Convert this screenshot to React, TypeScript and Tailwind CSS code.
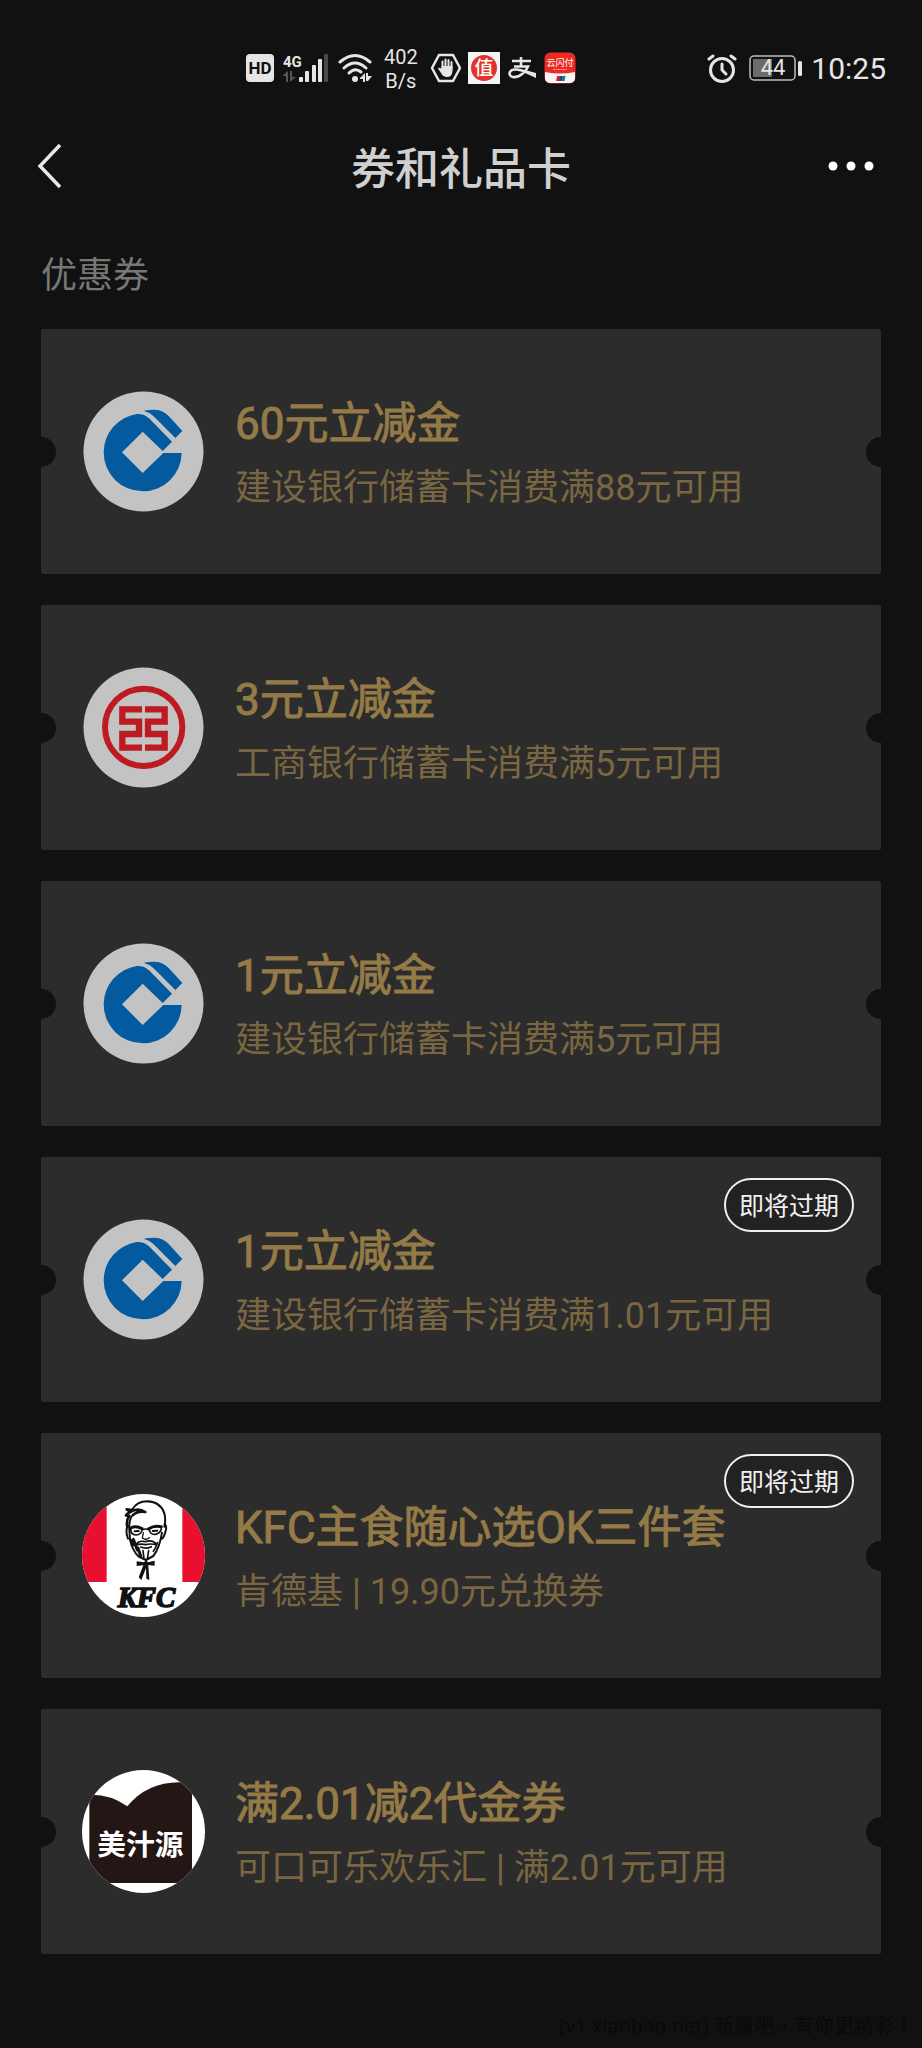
import React from 'react';

type LogoKind = 'ccb' | 'icbc' | 'kfc' | 'mmj';

interface Coupon {
    id: number;
    logo: LogoKind;
    title: string;
    detail: string;
    expiring?: boolean;
}

const coupons: Coupon[] = [
    { id: 1, logo: 'ccb', title: '60元立减金', detail: '建设银行储蓄卡消费满88元可用' },
    { id: 2, logo: 'icbc', title: '3元立减金', detail: '工商银行储蓄卡消费满5元可用' },
    { id: 3, logo: 'ccb', title: '1元立减金', detail: '建设银行储蓄卡消费满5元可用' },
    { id: 4, logo: 'ccb', title: '1元立减金', detail: '建设银行储蓄卡消费满1.01元可用', expiring: true },
    { id: 5, logo: 'kfc', title: 'KFC主食随心选OK三件套', detail: '肯德基 | 19.90元兑换券', expiring: true },
    { id: 6, logo: 'mmj', title: '满2.01减2代金券', detail: '可口可乐欢乐汇 | 满2.01元可用' },
];

function CcbLogo() {
    return (
        <svg viewBox="186 237 369 369" className="size-[123px] shrink-0" aria-hidden="true">
            <circle cx="370.5" cy="421.5" r="180" fill="#c3c3c3" />
            <path
                fill="#035a9e"
                d="M485 426H430L368 486L306 424L368 362L428 420L456 392L390 325Q374 308 350 309A117 117 0 0 0 251 424A117 117 0 0 0 368 541A117 117 0 0 0 485 426Z"
            />
            <path fill="#035a9e" d="M371 299Q385 296 404 296Q430 297 446 315L487 360L466 381L401 316Q388 303 371 299Z" />
        </svg>
    );
}

function IcbcLogo() {
    return (
        <svg viewBox="66 47 369 369" className="size-[123px] shrink-0" aria-hidden="true">
            <circle cx="250.5" cy="231.5" r="180" fill="#c3c3c3" />
            <circle cx="251" cy="231" r="116" fill="none" stroke="#bd1a22" strokeWidth="18" />
            <g fill="none" stroke="#bd1a22" strokeWidth="19">
                <path d="M246 177H187V214H237V251H187V292H246" />
                <path d="M255 177H314V214H264V251H314V292H255" />
            </g>
        </svg>
    );
}

function KfcLogo() {
    return (
        <svg viewBox="36 44 369 369" className="size-[123px] shrink-0 rounded-full bg-white" aria-hidden="true">
            <path fill="#e8102e" d="M30 40H110V308H30ZM337 40H410V308H337Z" />
            <g fill="none" stroke="#111" strokeWidth="6" strokeLinecap="round" strokeLinejoin="round">
                <path d="M186 92Q200 66 232 66Q272 68 283 102Q288 122 283 142" />
                <path d="M186 92L170 90L180 97L168 108L178 110Q168 122 172 142" strokeWidth="8" />
                <path d="M180 98Q204 84 226 98Q204 94 188 108" strokeWidth="8" />
                <path d="M184 112Q176 128 178 150L180 180Q186 212 206 232L228 242L250 230Q268 208 276 160" />
                <path d="M172 142Q166 158 174 178M284 134Q292 142 286 158Q282 174 276 178" />
                <path d="M182 146Q198 138 216 148M236 148Q252 138 274 142" strokeWidth="9" />
                <path d="M182 150Q182 166 198 167Q214 166 216 152M238 152Q240 166 256 165Q272 162 274 148M216 152Q227 146 238 152" strokeWidth="5" />
                <path d="M194 156L206 155M248 155L262 154" strokeWidth="6" />
                <path d="M220 160L217 176Q228 184 238 175" strokeWidth="4" />
                <path d="M196 198Q206 182 226 187Q248 180 260 196Q240 192 227 196Q212 192 196 198Z" strokeWidth="5" />
                <path d="M212 203Q228 210 244 202" strokeWidth="5" />
                <path d="M184 184L190 196M190 180L202 212M204 206L212 230" strokeWidth="9" />
                <path d="M219 214L222 240M236 214L232 240M262 190Q258 206 250 216" strokeWidth="5" />
            </g>
            <path fill="#111" d="M200 246L222 249L228 243L234 249L254 244V259L235 257L238 302L229 298L228 266L214 302L206 294L220 258L200 260Z" />
            <text
                x="143"
                y="384"
                fontSize="86"
                fontWeight="700"
                fontStyle="italic"
                fill="#111"
                stroke="#111"
                strokeWidth="5"
                className="font-['Liberation_Serif',serif]"
            >
                KFC
            </text>
        </svg>
    );
}

function MmjLogo() {
    return (
        <svg viewBox="36 48 369 369" className="size-[123px] shrink-0 rounded-full bg-white" aria-hidden="true">
            <path fill="#241614" d="M58 122Q122 120 172 157Q232 84 330 85L366 100V387H58Z" />
            <text x="82" y="302" fontSize="86" fontWeight="700" fill="#fff" className="font-['Noto_Sans_CJK_SC',sans-serif]">
                美汁源
            </text>
        </svg>
    );
}

const logos: Record<LogoKind, React.ReactNode> = {
    ccb: <CcbLogo />,
    icbc: <IcbcLogo />,
    kfc: <KfcLogo />,
    mmj: <MmjLogo />,
};

function NetworkIcons() {
    return (
        <>
            <svg viewBox="0 0 28 28" className="size-7" aria-hidden="true">
                <rect width="28" height="28" rx="4" fill="#e6e6e6" />
                <text x="14" y="20" fontSize="17" fontWeight="700" textAnchor="middle" fill="#111" className="font-[Roboto,sans-serif]">
                    HD
                </text>
            </svg>
            <svg viewBox="0 0 48 30" className="ml-2 h-[30px] w-12" aria-hidden="true">
                <text x="1" y="14" fontSize="15" fontWeight="700" fill="#e6e6e6" className="font-[Roboto,sans-serif]">
                    4G
                </text>
                <path fill="#555" d="M1 22L6 18V29H4V23H1ZM8 18H10V24H14L8 29Z" />
                <g fill="#e6e6e6">
                    <rect x="17" y="24" width="4" height="5" rx="1" />
                    <rect x="23" y="18" width="4" height="11" rx="1" />
                    <rect x="30" y="12" width="4" height="17" rx="1" />
                    <rect x="36" y="6" width="4" height="23" rx="1" />
                </g>
                <rect x="42" y="1" width="4" height="28" rx="1" fill="#4a4a4a" />
            </svg>
            <svg viewBox="0 0 34 30" className="ml-2 h-[30px] w-[34px]" aria-hidden="true">
                <g fill="none" stroke="#e6e6e6" strokeWidth="3" strokeLinecap="round">
                    <path d="M2 9Q17 -4 32 9" />
                    <path d="M6 15Q17 5 28 15" />
                    <path d="M11 20Q17 14 23 19" />
                </g>
                <circle cx="17" cy="26" r="3" fill="#e6e6e6" />
                <path fill="#e6e6e6" d="M22 25L27 20V29H25V26H22ZM28 20H30V23H34L30 28H28Z" />
            </svg>
        </>
    );
}

function AppIcons() {
    return (
        <>
            <svg viewBox="0 0 32 30" className="h-[30px] w-8" aria-hidden="true">
                <path d="M9 2H23L30 15L23 28H9L2 15Z" fill="none" stroke="#e6e6e6" strokeWidth="2.5" strokeLinejoin="round" />
                <path d="M12.500 16V8.500M15.500 14V6.500M18.500 14V7M21.500 16V9" stroke="#e6e6e6" strokeWidth="2" strokeLinecap="round" />
                <path d="M11.500 13H22.500V18Q22 24 17 24Q13 24 11 20L8 15.500Q9.500 14 11.500 16Z" fill="#e6e6e6" />
            </svg>
            <svg viewBox="0 0 32 32" className="ml-1.5 size-8" aria-hidden="true">
                <rect width="32" height="32" fill="#f4f4f4" />
                <circle cx="16" cy="16" r="13" fill="#e0332c" />
                <text x="16" y="23" fontSize="19" fontWeight="500" textAnchor="middle" fill="#fff" className="font-['Noto_Sans_CJK_SC',sans-serif]">
                    值
                </text>
            </svg>
            <svg viewBox="0 0 28 24" className="ml-2 h-6 w-7" aria-hidden="true">
                <g fill="none" stroke="#e6e6e6" strokeWidth="2.600">
                    <path d="M13 1V10M4 5H23M6 10.500H20Q17 17 11 20Q3 23 1.500 18Q1.500 13 9 13.500Q16 14.500 28 19.500" />
                </g>
                <path d="M17 14L28 17V22L15 16Z" fill="#e6e6e6" />
            </svg>
            <svg viewBox="0 0 32 32" className="ml-2 size-8" aria-hidden="true">
                <rect x="0.500" y="0.500" width="31" height="31" rx="6" fill="#ee2a24" />
                <path d="M1 20Q16 23 31 20V26Q31 31 25 31H7Q1 31 1 26Z" fill="#f6f6f6" />
                <text x="16" y="14" fontSize="9" textAnchor="middle" fill="#fff" className="font-['Noto_Sans_CJK_SC',sans-serif]">
                    云闪付
                </text>
                <path d="M9 17.500H23" stroke="#f7a09c" strokeWidth="1.200" strokeDasharray="2 0.500" />
                <path d="M13 24H17L15.500 29H12Z" fill="#d7263d" />
                <path d="M16 24H19L17.500 29H15Z" fill="#23417c" />
                <path d="M18.500 24H21.500L20.500 29H17.500Z" fill="#0f7c83" />
            </svg>
        </>
    );
}

function StatusBar() {
    return (
        <div className="flex h-24 items-center justify-between pt-10 pr-9 pl-[246px] text-[#e6e6e6]">
            <div className="flex items-center">
                <NetworkIcons />
                <div className="mx-3 pt-0.5 text-center text-xl leading-6">
                    <p>402</p>
                    <p>B/s</p>
                </div>
                <AppIcons />
            </div>
            <div className="flex items-center">
                <svg viewBox="0 0 30 30" className="size-[30px]" aria-hidden="true">
                    <g fill="none" stroke="#e6e6e6" strokeWidth="3" strokeLinecap="round">
                        <circle cx="15" cy="17" r="11.500" />
                        <path d="M15 11V17L19 21" />
                        <path d="M2 6L6 3M28 6L24 3" />
                    </g>
                </svg>
                <svg viewBox="0 0 54 26" className="ml-3 h-[26px] w-[54px]" aria-hidden="true">
                    <rect x="1" y="1" width="45" height="24" rx="4" fill="none" stroke="#bdbdbd" strokeWidth="1.500" />
                    <rect x="4" y="4" width="19" height="18" fill="#6c6c6c" />
                    <rect x="49" y="6" width="4" height="15" rx="1.500" fill="#e6e6e6" />
                    <text x="24" y="20" fontSize="22" textAnchor="middle" fill="#e6e6e6" className="font-[Roboto,sans-serif]">
                        44
                    </text>
                </svg>
                <time className="ml-2 pt-0.5 text-3xl">10:25</time>
            </div>
        </div>
    );
}

function CouponCard({ coupon }: { coupon: Coupon }) {
    return (
        <li className="relative flex h-[245px] items-center gap-[30px] overflow-hidden rounded-xs bg-[#2c2c2c] px-[41px]">
            <span className="absolute top-1/2 -left-[15px] size-[30px] -translate-y-1/2 rounded-full bg-[#111111]" />
            <span className="absolute top-1/2 -right-[15px] size-[30px] -translate-y-1/2 rounded-full bg-[#111111]" />
            {logos[coupon.logo]}
            <div className="min-w-0 pt-2 whitespace-nowrap">
                <h3 className="text-[44px] leading-[64px] text-[#947a47] [-webkit-text-stroke:1px_#947a47]">{coupon.title}</h3>
                <p className="text-4xl leading-[64px] text-[#7a6640]">{coupon.detail}</p>
            </div>
            {coupon.expiring && (
                <span className="absolute top-[21px] right-[27px] flex h-[54px] w-[130px] items-center justify-center rounded-full border-2 border-[#f0f0f0] bg-[#222222] pt-1 text-[25px] text-[#f0f0f0]">
                    即将过期
                </span>
            )}
        </li>
    );
}

export default function App() {
    return (
        <div className="flex min-h-screen flex-col bg-[#111111] font-[Roboto,'Noto_Sans_CJK_SC',sans-serif]">
            <StatusBar />
            <header className="grid h-[140px] grid-cols-[1fr_auto_1fr] items-center px-9">
                <button type="button" aria-label="返回" className="justify-self-start">
                    <svg viewBox="0 0 28 46" className="h-[46px] w-7">
                        <path d="M24 2L4 23L24 44" fill="none" stroke="#e8e8e8" strokeWidth="3.500" />
                    </svg>
                </button>
                <h1 className="pt-2 text-[44px] font-medium text-[#d0d0d0]">券和礼品卡</h1>
                <button type="button" aria-label="更多" className="justify-self-end pr-3">
                    <svg viewBox="0 0 46 10" className="h-2.5 w-[46px]" fill="#fff">
                        <circle cx="5" cy="5" r="4.500" />
                        <circle cx="23" cy="5" r="4.500" />
                        <circle cx="41" cy="5" r="4.500" />
                    </svg>
                </button>
            </header>
            <main className="px-[41px] pt-[14px]">
                <h2 className="text-4xl leading-[52px] text-[#777777]">优惠券</h2>
                <ul className="mt-[27px] flex flex-col gap-[31px]">
                    {coupons.map((coupon) => (
                        <CouponCard key={coupon.id} coupon={coupon} />
                    ))}
                </ul>
            </main>
            <footer className="mt-auto pr-2 pb-2 text-right font-['Open_Sans','Noto_Sans_CJK_TC',sans-serif] text-xl text-[#090909]">
                [v1.xianbao.net] 新赚吧，有你更精彩！
            </footer>
        </div>
    );
}
